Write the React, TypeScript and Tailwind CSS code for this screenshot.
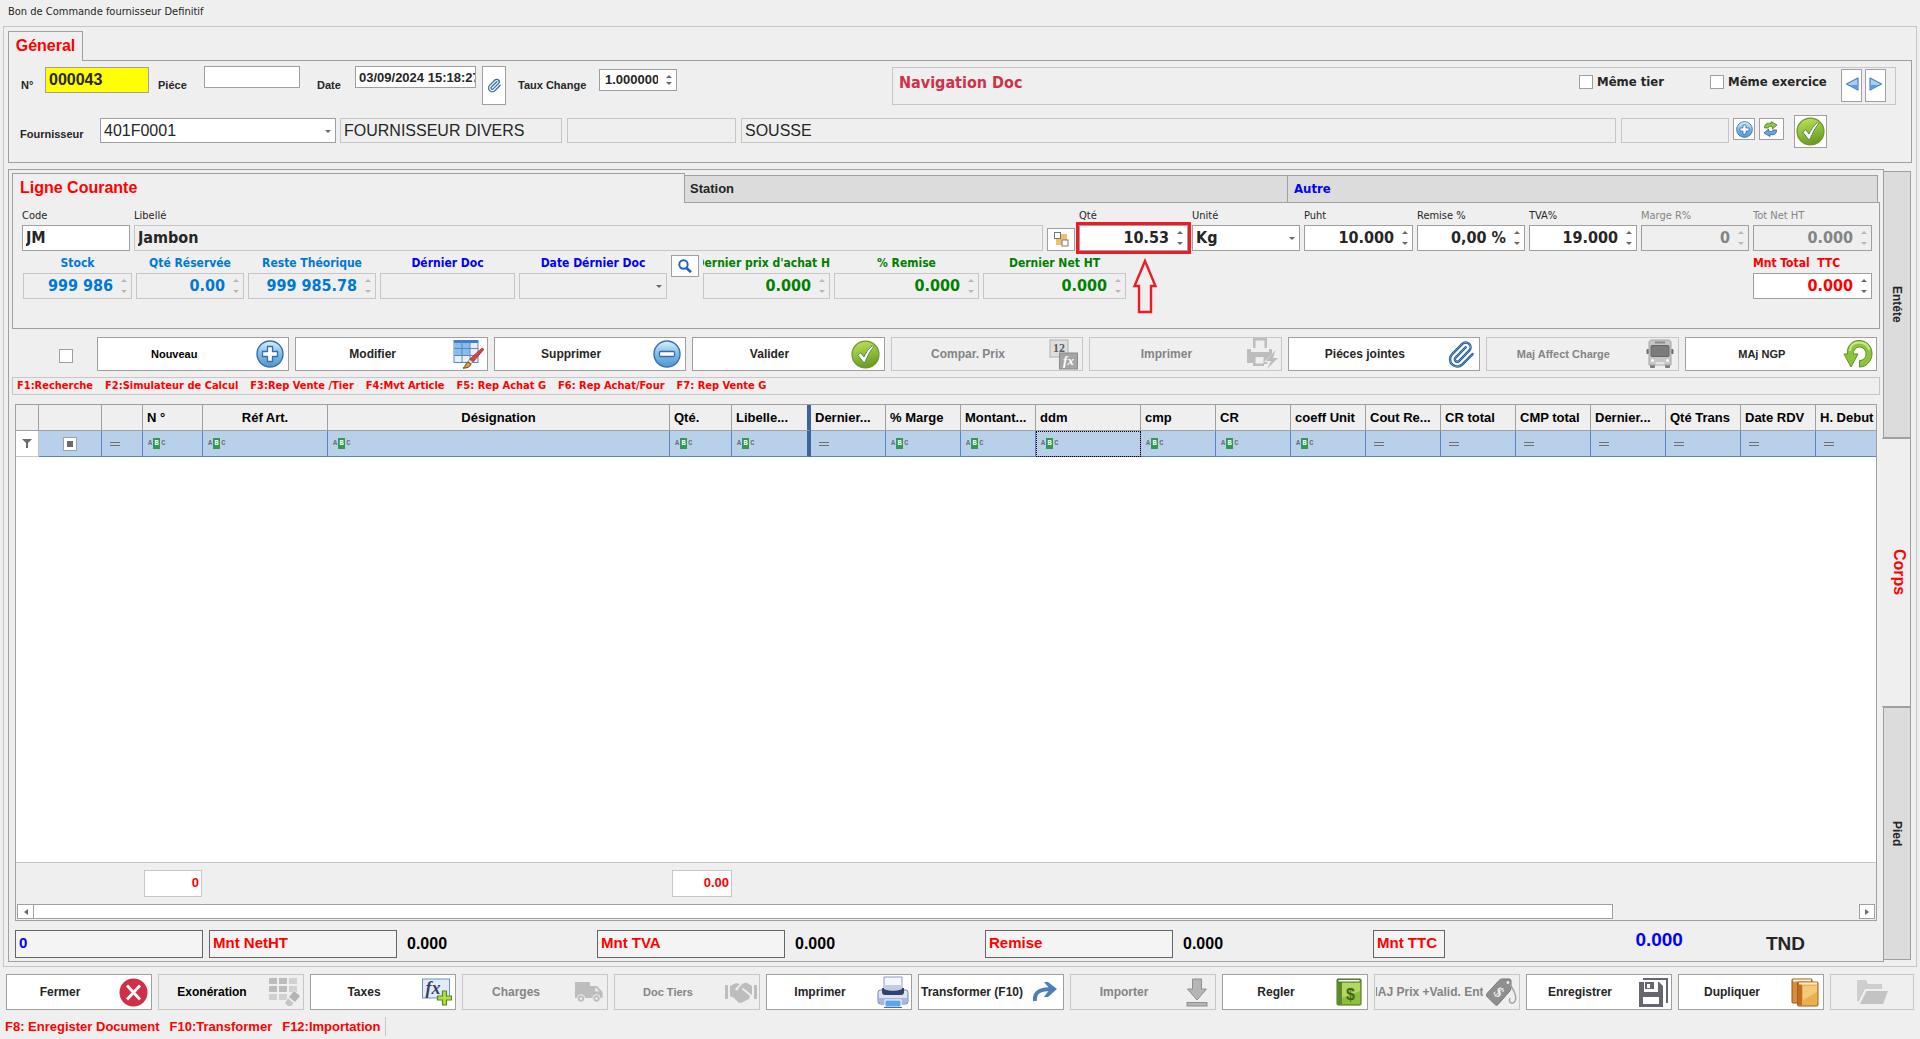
import React, { useId } from 'react';

const TAHOMA = "font-['DejaVu_Sans_Condensed','DejaVu_Sans',sans-serif]";

/* ---------- icons ---------- */

function BlueDisc({ size, minus = false }: { size: number; minus?: boolean }) {
  const id = useId();
  return (
    <svg width={size} height={size} viewBox="0 0 28 28" aria-hidden="true">
      <defs>
        <linearGradient id={id} x1="0" y1="0" x2="0" y2="1">
          <stop offset="0" stopColor="#d6f3fb" />
          <stop offset="0.5" stopColor="#7dbde6" />
          <stop offset="1" stopColor="#4f97d3" />
        </linearGradient>
      </defs>
      <circle cx="14" cy="14" r="13" fill={`url(#${id})`} stroke="#3d6fae" strokeWidth="1.4" />
      {minus ? (
        <rect x="6.5" y="11.5" width="15" height="5" rx="1" fill="#fff" stroke="#3f68a6" strokeWidth="1.3" />
      ) : (
        <path d="M11.5 6.5h5v5h5v5h-5v5h-5v-5h-5v-5h5z" fill="#fff" stroke="#3f68a6" strokeWidth="1.3" strokeLinejoin="round" />
      )}
    </svg>
  );
}

function GreenCheck({ size }: { size: number }) {
  const id = useId();
  return (
    <svg width={size} height={size} viewBox="0 0 28 28" aria-hidden="true">
      <defs>
        <linearGradient id={id} x1="0" y1="0" x2="0.3" y2="1">
          <stop offset="0" stopColor="#c6e265" />
          <stop offset="0.5" stopColor="#93c63a" />
          <stop offset="1" stopColor="#6f9d22" />
        </linearGradient>
      </defs>
      <circle cx="14" cy="14" r="13" fill={`url(#${id})`} stroke="#6f9632" strokeWidth="1.2" />
      <path d="M6.5 14.500l3-2.200 3 4.200c2-4.500 4.500-8 8-11l1.500.8c-3.500 4-6 9-8.500 15.200h-1.500z" fill="#fff" stroke="#5a7f5a" strokeWidth="0.9" strokeLinejoin="round" />
    </svg>
  );
}

const IconTableBrush = () => (
  <svg width="32" height="30" viewBox="0 0 32 30" aria-hidden="true">
    <rect x="1" y="1.500" width="24" height="22" fill="#e6f0fb" stroke="#5b86c0" />
    <rect x="2" y="2" width="15" height="14" fill="#86bdec" />
    <rect x="1" y="1" width="24" height="3" fill="#3f7fc4" />
    <path d="M9 2v21M17 2v21M1 9.500h24M1 16.500h24" stroke="#5b86c0" strokeWidth="1" />
    <path d="M28.500 9.500c1.500-.8 2.500.6 1.600 1.800L20 23l-3.500-2.500z" fill="#d9443c" stroke="#8f2a25" strokeWidth="0.8" />
    <path d="M16.500 20.500L20 23l-2 2.200-3.200-2.400z" fill="#dfe3e8" stroke="#777" strokeWidth="0.6" />
    <path d="M14.800 22.800l3.200 2.400c-1 2.600-3.500 4-8 4 2.500-1.500 2.500-4.600 4.800-6.400z" fill="#e0a030" stroke="#5c3b12" strokeWidth="0.9" />
  </svg>
);

const CLIP = 'm16 6-8.414 8.586a2 2 0 0 0 2.829 2.829l8.414-8.586a4 4 0 1 0-5.657-5.657l-8.379 8.551a6 6 0 1 0 8.485 8.485l8.379-8.551';

const IconClip = ({ size }: { size: number }) => (
  <svg width={size} height={size} viewBox="1 0 23 24" fill="none" strokeLinecap="round" strokeLinejoin="round" aria-hidden="true">
    <path d={CLIP} stroke="#1f5596" strokeWidth="2" />
    <path d={CLIP} stroke="#7fb2e2" strokeWidth="0.600" />
  </svg>
);

const IconCompare = () => (
  <svg width="30" height="31" viewBox="0 0 30 31" aria-hidden="true">
    <rect x="1" y="1" width="18" height="17" fill="#dedede" stroke="#b0b0b0" />
    <text x="10" y="13" textAnchor="middle" fontFamily="Liberation Serif" fontWeight="bold" fontSize="12" fill="#5e5e5e">12</text>
    <rect x="10.500" y="14" width="18" height="16" fill="#a5a5a5" stroke="#8b8b8b" />
    <text x="19.500" y="26" textAnchor="middle" fontFamily="Liberation Serif" fontStyle="italic" fontWeight="bold" fontSize="13" fill="#fff">fx</text>
  </svg>
);

const IconQuickPrint = () => (
  <svg width="33" height="32" viewBox="0 0 33 32" fill="#bdbdbd" aria-hidden="true">
    <path d="M7 0h14v10h-2.500V2.500h-9V10H7z" />
    <path d="M1 11h4v3h18v-3h3v5l-8 8h4l-1 2H18v2H7v-3H1zM9.500 19v6.500h8V19z" fillRule="evenodd" />
    <path d="M29.500 12L20 23h5l-4 8 11-11h-5z" />
  </svg>
);

const IconBus = () => (
  <svg width="28" height="30" viewBox="0 0 28 30" aria-hidden="true">
    <rect x="4" y="24" width="5" height="5" rx="1" fill="#7d7d7d" />
    <rect x="19" y="24" width="5" height="5" rx="1" fill="#7d7d7d" />
    <rect x="0.500" y="10" width="2.500" height="5" rx="1" fill="#6d6d6d" />
    <rect x="25" y="10" width="2.500" height="5" rx="1" fill="#6d6d6d" />
    <path d="M3 4c0-2 1-3 3-3h16c2 0 3 1 3 3v22H3z" fill="#c6c6c6" stroke="#a5a5a5" />
    <rect x="9" y="2.500" width="10" height="2" fill="#8a8a8a" />
    <rect x="5" y="6.500" width="18" height="11" rx="1" fill="#7b7b7b" stroke="#666" />
    <circle cx="6.500" cy="21.500" r="1.500" fill="#fff" />
    <circle cx="21.500" cy="21.500" r="1.500" fill="#fff" />
    <rect x="9.500" y="23" width="9" height="2.500" fill="#e4e4e4" />
  </svg>
);

const IconGreenUndo = () => (
  <svg width="30" height="30" viewBox="0 0 30 30" aria-hidden="true">
    <path d="M4.500 15C3.500 7 9 1.500 16 1.500c7.500 0 13 5.500 13 13S23.500 28 16.500 28v-6.500c4 0 6.500-3 6.500-6.500 0-4-3-7-6.500-7s-6.500 3-6 7H15L8 28 1 15z" fill="#8bc53b" stroke="#5f8f28" strokeWidth="1" strokeLinejoin="round" />
    <path d="M7 12C7 6.500 11 3.500 16 3.500s9 3 10.500 7.500" stroke="#cfe88a" strokeWidth="1.800" fill="none" />
  </svg>
);

const IconRedClose = () => (
  <svg width="29" height="29" viewBox="0 0 29 29" aria-hidden="true">
    <circle cx="14.500" cy="14.500" r="14" fill="#d02f48" />
    <path d="M8 7.500l13 14M21 7.500l-13 14" stroke="#fff" strokeWidth="2.800" />
  </svg>
);

const IconGridErase = () => (
  <svg width="32" height="30" viewBox="0 0 32 30" aria-hidden="true">
    <g fill="#bcbcbc">
      <rect x="0" y="1" width="8" height="6" /><rect x="10" y="1" width="8" height="6" /><rect x="20" y="1" width="8" height="6" fill="#d0d0d0" />
      <rect x="0" y="9" width="8" height="6" /><rect x="10" y="9" width="8" height="6" /><rect x="20" y="9" width="8" height="6" fill="#d0d0d0" />
      <rect x="0" y="17" width="8" height="6" fill="#d0d0d0" /><rect x="10" y="17" width="8" height="6" fill="#d0d0d0" />
    </g>
    <path d="M25 13l7 6-9 11h-3l-5-5z" fill="#efefef" />
    <path d="M25 14l6 5-5 6-6-5z" fill="#b4b4b4" />
    <path d="M19 21.500l5.500 4.500-2.500 3h-3l-3-3z" fill="#c4c4c4" />
  </svg>
);

const IconFxPlus = () => (
  <svg width="30" height="28" viewBox="0 0 30 28" aria-hidden="true">
    <rect x="0.500" y="1" width="27" height="19" fill="#e3ebf8" stroke="#6d8fc4" />
    <text x="11" y="16" textAnchor="middle" fontFamily="Liberation Serif" fontStyle="italic" fontWeight="bold" fontSize="18" fill="#33435c">fx</text>
    <path d="M20.500 13h4v5h5v4h-5v5h-4v-5h-5v-4h5z" fill="#b4dc4c" stroke="#568a1c" strokeWidth="1.200" />
  </svg>
);

const IconTruck = () => (
  <svg width="28" height="22" viewBox="0 0 28 22" fill="#bdbdbd" aria-hidden="true">
    <path d="M0 1h15v16H0zM15 5h7l5.500 6v6H15z" />
    <path d="M20 7h1.500l3 3.500H20z" fill="#e8e8e8" />
    <circle cx="6" cy="17.500" r="3.800" stroke="#efefef" /><circle cx="21.500" cy="17.500" r="3.800" stroke="#efefef" />
    <circle cx="6" cy="17.500" r="1.300" fill="#efefef" /><circle cx="21.500" cy="17.500" r="1.300" fill="#efefef" />
  </svg>
);

const IconHandshake = () => (
  <svg width="32" height="22" viewBox="0 0 32 22" fill="#bdbdbd" aria-hidden="true">
    <rect x="0" y="4" width="3" height="14" /><rect x="29" y="4" width="3" height="14" />
    <path d="M5 5l6-3 4 1-5 5c1 2 4 2 6-.500l9 7.500-1 3-7 3.500L14 22l-5-5-4-2z" />
    <path d="M17 3l4-1.500L27 5v9l-9-7-4 2.500-1.500-1z" />
  </svg>
);

const IconPrinter = () => (
  <svg width="32" height="32" viewBox="0 0 32 32" aria-hidden="true">
    <rect x="1" y="14" width="30" height="14" rx="2.500" fill="#dbe3f4" stroke="#6f7fae" />
    <path d="M2 22h28v5H2z" fill="#a9b7dc" />
    <path d="M5 12h22v4c0 2-1 3-3 3H8c-2 0-3-1-3-3z" fill="#34416b" />
    <path d="M7 1h18v11c-4 3-14 3-18 0z" fill="#f3f6fd" stroke="#8d9ac4" />
    <path d="M7 9h18v4c-4 2-14 2-18 0z" fill="#c2cce6" />
    <rect x="8" y="24" width="16" height="7" fill="#5ba6e6" stroke="#fff" />
    <path d="M7 31.500h18" stroke="#5a6a9a" />
  </svg>
);

const IconTransform = () => (
  <svg width="24" height="20" viewBox="0 0 24 20" aria-hidden="true">
    <path d="M2 19C1 10 7 7 19 7" stroke="#4a7fb8" strokeWidth="4" fill="none" />
    <path d="M11 0h4l9 7-9 8h-4l6-8z" fill="#4a7fb8" />
  </svg>
);

const IconDownload = () => (
  <svg width="22" height="29" viewBox="0 0 22 29" fill="#b5b5b5" stroke="#8f8f8f" aria-hidden="true">
    <path d="M6.500 1h9v10h5L11 22 1.500 11h5z" />
    <rect x="1" y="24.500" width="20" height="3.500" />
  </svg>
);

const IconMoneyBook = () => (
  <svg width="26" height="28" viewBox="0 0 26 28" aria-hidden="true">
    <rect x="1" y="1" width="24" height="26" rx="1" fill="#8fc03c" stroke="#456b1c" />
    <rect x="1.500" y="1.500" width="4.500" height="25" fill="#5c8a2a" />
    <rect x="2" y="1.500" width="22" height="2.500" fill="#eef6f4" stroke="#456b1c" strokeWidth="0.800" />
    <path d="M6 5h18v8L6 20z" fill="#b2d860" />
    <text x="14.500" y="22" textAnchor="middle" fontFamily="Liberation Sans" fontWeight="bold" fontSize="16" fill="#41641b">$</text>
  </svg>
);

const IconTag = () => (
  <svg width="31" height="29" viewBox="0 0 31 29" aria-hidden="true">
    <path d="M13 2.500C14 1.500 15 1 16 1h7c1.500 0 2 1 2 2v7c0 1-.5 2-1.200 3L12 26.500c-1 1-2 1-3 0L1 18.500c-1-1-.8-2 0-3z" fill="#8f8f8f" stroke="#757575" />
    <circle cx="22" cy="4.500" r="1.500" fill="#eee" />
    <path d="M23 5c5 7 8 14 6 18s-7 2-5-3" fill="none" stroke="#a0a0a0" strokeWidth="1.400" />
    <text x="13" y="19" textAnchor="middle" transform="rotate(45 13 14)" fontFamily="Liberation Serif" fontWeight="bold" fontSize="15" fill="#ededed">$</text>
  </svg>
);

const IconSave = () => (
  <svg width="29" height="29" viewBox="0 0 29 29" fill="#67666f" aria-hidden="true">
    <path d="M4 0h25v25h-2V2H4z" />
    <path d="M0 4h5v10h14V4h1l4 4v21H0zM4 19v7h16v-7z" fillRule="evenodd" />
    <path d="M6 4h9v7H6zM8 6v4h3V6z" fillRule="evenodd" />
  </svg>
);

const IconBooks = () => (
  <svg width="28" height="29" viewBox="0 0 28 29" aria-hidden="true">
    <rect x="1" y="1" width="20" height="24" rx="1" fill="#d98c3c" stroke="#9a5212" />
    <rect x="2" y="1.500" width="18" height="2" fill="#fdf3de" />
    <rect x="6.500" y="4" width="20.500" height="24" rx="1" fill="#eab04e" stroke="#a3611a" />
    <rect x="7" y="4.500" width="4" height="23" fill="#c06c22" />
    <rect x="8" y="4.500" width="18" height="2" fill="#fdf3de" />
    <path d="M12 8h14v6l-14 8z" fill="#f4ca78" />
  </svg>
);

const IconFolder = () => (
  <svg width="31" height="24" viewBox="0 0 31 24" fill="#c3c3c3" aria-hidden="true">
    <path d="M0 21V0h9l2 4h14v5H8L1.500 22z" fill="#cecece" />
    <path d="M9.500 11H31l-5 13H3z" />
  </svg>
);

const IconRefresh = () => (
  <svg width="15" height="16" viewBox="0 0 15 16" strokeLinejoin="round" aria-hidden="true">
    <path d="M1.500 7C1 3.500 4 1.500 8 2.500V.5L14 4 9.500 8V6C7 5 5.500 5.500 5 7z" fill="#8dc63f" stroke="#4f7f1a" strokeWidth="0.800" />
    <path d="M13.500 9c.5 3.500-2.500 5.500-6.500 4.500v2L1 12l4.500-4v2c2.500 1 4 .5 4.500-1z" fill="#6ba5dc" stroke="#2f5f9c" strokeWidth="0.800" />
  </svg>
);

const IconNav = ({ right = false }: { right?: boolean }) => (
  <svg width="14" height="14" viewBox="0 0 14 14" aria-hidden="true">
    <path d={right ? 'M1 1v12L12.500 7z' : 'M13 1v12L1.500 7z'} fill="#a8d0f2" stroke="#4a7fc0" strokeWidth="1.200" strokeLinejoin="round" />
    <path d={right ? 'M2 8v4l8-4z' : 'M12 8v4L4 8z'} fill="#5b9bdc" />
  </svg>
);

const IconSearch = () => (
  <svg width="14" height="14" viewBox="0 0 14 14" fill="none" stroke="#1f5fc0" aria-hidden="true">
    <circle cx="5.500" cy="5.500" r="4.200" strokeWidth="1.900" />
    <path d="M8.500 9l4.500 4.200" strokeWidth="2.600" />
  </svg>
);

const IconSquares = () => (
  <svg width="15" height="15" viewBox="0 0 15 15" aria-hidden="true">
    <path d="M7 2h6v6H7zM2 7h6v6H2z" fill="#f0bf68" />
    <rect x="0.500" y="0.500" width="6" height="6" fill="#fff" stroke="#777" />
    <rect x="8" y="8" width="6" height="6" fill="#fff" stroke="#777" />
  </svg>
);

const IconAbc = () => (
  <span className="flex items-center gap-px font-['Liberation_Mono',monospace] text-[7px] leading-[11px] font-bold text-[#6e6e6e]" aria-label="Filtre texte">
    <span>A</span>
    <span className="h-[11px] w-[7px] bg-[#2f9a50] text-center text-white">B</span>
    <span>C</span>
  </span>
);

const IconEq = () => (
  <svg className="ml-[3px]" width="10" height="4" viewBox="0 0 10 4" aria-hidden="true">
    <path d="M0 .5h10M0 3.500h10" stroke="#707070" />
  </svg>
);

const Arrows = ({ light = false }: { light?: boolean }) => (
  <span className={`flex w-[18px] shrink-0 flex-col items-center justify-between py-[5px] pl-1 ${light ? 'text-[#b8b8b8]' : 'text-[#6a6a6a]'}`}>
    <button type="button" aria-label="Augmenter" disabled={light}><svg width="6" height="3" viewBox="0 0 6 3" className="block"><path d="M0 3l3-3 3 3z" fill="currentColor" /></svg></button>
    <button type="button" aria-label="Diminuer" disabled={light}><svg width="6" height="3" viewBox="0 0 6 3" className="block"><path d="M0 0l3 3 3-3z" fill="currentColor" /></svg></button>
  </span>
);

const Caret = () => (
  <svg className="pointer-events-none absolute top-1/2 right-1 -mt-px" width="6" height="3" viewBox="0 0 6 3" aria-hidden="true">
    <path d="M0 0l3 3 3-3z" fill="#6a6a6a" />
  </svg>
);

/* ---------- fields ---------- */

interface FieldProps {
  label: string;
  value?: string;
  width: string;
  kind?: 'text' | 'spin' | 'select';
  /* frame and text colour of the control */
  look?: string;
  labelLook?: string;
  light?: boolean;
  children?: React.ReactNode;
}

const WHITE = 'border-[#a0a0a0] bg-white text-[#262626]';
const MUTED = 'border-[#a0a0a0] bg-[#efefef] text-[#848484]';

function Field({ label, value = '', width, kind = 'spin', look = WHITE, labelLook = 'h-[14px] text-[11px] leading-[14px] text-[#262626]', light = false, children }: FieldProps) {
  const id = useId();
  return (
    <div className={`relative flex flex-col gap-[2px] ${width} ${TAHOMA}`}>
      <label htmlFor={id} className={`flex overflow-hidden whitespace-nowrap ${labelLook}`}>{label}</label>
      <div className={`relative flex h-[26px] border text-[16px] font-bold ${look}`}>
        {kind === 'select' ? (
          <>
            <select id={id} defaultValue={value} className="w-full appearance-none pl-[3px] outline-none">
              <option>{value}</option>
            </select>
            <Caret />
          </>
        ) : (
          <input id={id} defaultValue={value} disabled={light} className={`w-0 min-w-0 flex-1 outline-none ${kind === 'spin' ? 'text-right' : 'pl-[3px]'}`} />
        )}
        {kind === 'spin' && <Arrows light={light} />}
        {children}
      </div>
    </div>
  );
}

const SUB = 'h-4 justify-center text-[12px] leading-4 font-bold';
const SUB_CYAN = `${SUB} text-[#0078d7]`;
const SUB_BLUE = `${SUB} text-[#0000ff]`;
const SUB_GREEN = `${SUB} text-[#008000]`;

/* ---------- buttons ---------- */

interface ToolProps {
  label?: string;
  icon: React.ReactNode;
  off?: boolean;
  text?: string;
}

function Tool({ label, icon, off = false, text = 'text-[12px]' }: ToolProps) {
  return (
    <button
      type="button"
      disabled={off}
      aria-label={label ?? 'Ouvrir'}
      className={`flex min-w-0 items-center border font-bold ${text} ${off ? 'border-[#c6c6c6] bg-[#efefef] text-[#848484]' : 'border-[#a0a0a0] bg-white text-[#262626]'}`}
    >
      {label && <span className="ml-px flex min-w-0 flex-1 justify-center overflow-hidden pr-[3px] whitespace-nowrap">{label}</span>}
      <span className={`flex shrink-0 justify-center ${label ? 'w-9' : 'w-full'}`}>{icon}</span>
    </button>
  );
}

/* ---------- grid ---------- */

interface Col {
  name: string;
  w: string;
  f: 'abc' | 'eq';
  center?: boolean;
}

const columns: Col[] = [
  { name: '', w: 'w-[41px]', f: 'eq' },
  { name: 'N °', w: 'w-[60px]', f: 'abc' },
  { name: 'Réf Art.', w: 'w-[125px]', f: 'abc', center: true },
  { name: 'Désignation', w: '', f: 'abc', center: true },
  { name: 'Qté.', w: 'w-[62px]', f: 'abc' },
  { name: 'Libelle...', w: 'w-[79px]', f: 'abc' },
  { name: 'Dernier...', w: 'w-[75px]', f: 'eq' },
  { name: '% Marge', w: 'w-[75px]', f: 'abc' },
  { name: 'Montant...', w: 'w-[75px]', f: 'abc' },
  { name: 'ddm', w: 'w-[105px]', f: 'abc' },
  { name: 'cmp', w: 'w-[75px]', f: 'abc' },
  { name: 'CR', w: 'w-[75px]', f: 'abc' },
  { name: 'coeff Unit', w: 'w-[75px]', f: 'abc' },
  { name: 'Cout Re...', w: 'w-[75px]', f: 'eq' },
  { name: 'CR total', w: 'w-[75px]', f: 'eq' },
  { name: 'CMP total', w: 'w-[75px]', f: 'eq' },
  { name: 'Dernier...', w: 'w-[75px]', f: 'eq' },
  { name: 'Qté Trans', w: 'w-[75px]', f: 'eq' },
  { name: 'Date RDV', w: 'w-[75px]', f: 'eq' },
  { name: 'H. Debut', w: 'w-[60px]', f: 'eq' },
];

function GridTable() {
  const last = columns.length - 1;
  return (
    <table className="w-full table-fixed border-separate border-spacing-0 text-[13px]">
      <thead>
        <tr className="h-[26px]">
          <th className="w-[23px] border-r border-b border-[#a0a0a0]" />
          <th className="w-[63px] border-r border-b border-[#a0a0a0]" />
          {columns.map((c, i) => (
            <th
              key={i}
              className={`overflow-hidden border-b border-b-[#a0a0a0] p-0 font-bold whitespace-nowrap text-black ${c.w} ${c.center ? 'text-center' : 'pl-[4px] text-left'} ${c.name === 'Libelle...' ? 'border-r-4 border-r-[#3c639c]' : i < last ? 'border-r border-r-[#a0a0a0]' : ''}`}
            >
              {c.name}
            </th>
          ))}
        </tr>
      </thead>
      <tbody>
        <tr className="h-[26px] bg-[#b9d0ea]">
          <td className="border-r border-b border-[#c6c6c6] bg-white p-0">
            <svg className="mx-auto" width="10" height="9" viewBox="0 0 10 9" aria-label="Filtre"><path d="M0 0h10L6 4v5H4V4z" fill="#6a6a6a" /></svg>
          </td>
          <td className="border-r border-b border-[#5c83c6] p-0">
            <input type="checkbox" aria-label="Filtrer la sélection" className="mx-auto grid h-[14px] w-[14px] appearance-none place-content-center border border-[#a0a0a0] bg-white before:block before:h-[6px] before:w-[6px] before:bg-[#6a6a6a]" />
          </td>
          {columns.map((c, i) => (
            <td
              key={i}
              className={`border-b border-b-[#5c83c6] p-0 pl-[5px] ${c.name === 'Libelle...' ? 'border-r-4 border-r-[#3c639c]' : i < last ? 'border-r border-r-[#5c83c6]' : ''} ${c.name === 'ddm' ? 'outline-1 -outline-offset-1 outline-black outline-dotted' : ''}`}
            >
              {c.f === 'abc' ? <IconAbc /> : <IconEq />}
            </td>
          ))}
        </tr>
      </tbody>
    </table>
  );
}

const shortcuts = ['F1:Recherche', 'F2:Simulateur de Calcul', 'F3:Rep Vente /Tier', 'F4:Mvt Article', 'F5: Rep Achat G', 'F6: Rep Achat/Four', 'F7: Rep Vente G'];

const totals = [
  { label: 'Mnt NetHT', value: '0.000' },
  { label: 'Mnt TVA', value: '0.000' },
  { label: 'Remise', value: '0.000' },
];

const TOTAL_BOX = 'flex h-[28px] items-center border border-[#646464] bg-[#f4f4f4] px-[3px] pb-px text-[15px] font-bold';
const LABEL11 = 'text-[11px] leading-4 font-bold text-[#262626]';

export default function App() {
  return (
    <div className="flex min-h-screen flex-col bg-[#efefef] font-['Liberation_Sans',Arial,sans-serif] text-[#262626]">
      <h1 className={`h-[26px] px-2 pt-1 text-[11px] leading-4 ${TAHOMA}`}>Bon de Commande fournisseur Definitif</h1>

      <main className="mx-[3px] flex flex-1 flex-col border border-[#c6c6c6] p-1">
        <div role="tablist" className="flex">
          <button type="button" role="tab" aria-selected="true" className="relative -mb-px h-[30px] w-[75px] border border-b-0 border-[#a0a0a0] bg-[#efefef] pb-[2px] text-[16px] font-bold text-[#ff0000]">Géneral</button>
        </div>

        <section className="border border-[#a0a0a0] pb-[14px]">
          <div className="flex items-start">
            <label htmlFor="num" className={`mt-4 ml-3 w-6 ${LABEL11}`}>N°</label>
            <input id="num" defaultValue="000043" className="mt-[6px] h-[26px] w-[104px] border border-[#a0a0a0] bg-[#ffff00] px-[3px] text-[16px] font-bold" />
            <label htmlFor="piece" className={`mt-4 ml-[9px] w-[46px] ${LABEL11}`}>Piéce</label>
            <input id="piece" className="mt-[5px] h-[22px] w-[96px] border border-[#a0a0a0] bg-white px-1" />
            <label htmlFor="date" className={`mt-4 ml-[17px] w-[38px] ${LABEL11}`}>Date</label>
            <input id="date" defaultValue="03/09/2024 15:18:27" className="mt-[5px] h-[22px] w-[121px] border border-[#a0a0a0] bg-white pl-[3px] text-[13px] font-bold" />
            <button type="button" aria-label="Joindre" className="mt-[5px] ml-[6px] flex h-[39px] w-[24px] items-center justify-center border border-[#a0a0a0] bg-white"><IconClip size={15} /></button>
            <label htmlFor="taux" className={`mt-4 ml-3 w-[81px] ${LABEL11}`}>Taux Change</label>
            <div className="mt-2 flex h-[22px] w-[78px] border border-[#a0a0a0] bg-white">
              <input id="taux" defaultValue="1.000000" className="w-0 min-w-0 flex-1 pl-[5px] text-[13px] font-bold outline-none" />
              <Arrows />
            </div>
            <div className={`mt-[6px] mr-[15px] ml-[215px] flex h-[38px] flex-1 items-start border border-[#c6c6c6] pr-[9px] font-bold ${TAHOMA}`}>
              <span className="mt-[3px] ml-[6px] flex-1 text-[16px] leading-6 text-[#d0304a]">Navigation Doc</span>
              <label className="mt-[6px] flex w-[131px] items-center gap-1 text-[13px] leading-4 whitespace-nowrap">
                <input type="checkbox" className="h-[14px] w-[14px] appearance-none border border-[#a0a0a0] bg-white" />Même tier
              </label>
              <label className="mt-[6px] flex w-[131px] items-center gap-1 text-[13px] leading-4 whitespace-nowrap">
                <input type="checkbox" className="h-[14px] w-[14px] appearance-none border border-[#a0a0a0] bg-white" />Même exercice
              </label>
              <button type="button" aria-label="Précédent" className="mt-px flex h-[33px] w-[21px] items-center justify-center border border-[#a0a0a0] bg-white pb-1"><IconNav /></button>
              <button type="button" aria-label="Suivant" className="mt-px ml-[3px] flex h-[33px] w-[21px] items-center justify-center border border-[#a0a0a0] bg-white pb-1"><IconNav right /></button>
            </div>
          </div>

          <div className="mt-[10px] flex items-start text-[16px]">
            <label htmlFor="four" className={`mt-[11px] ml-[11px] w-[80px] ${LABEL11}`}>Fournisseur</label>
            <div className="relative mt-[3px] h-[25px] w-[236px] border border-[#a0a0a0] bg-white">
              <select id="four" className="h-full w-full appearance-none pl-[3px]"><option>401F0001</option></select>
              <Caret />
            </div>
            <input aria-label="Nom du fournisseur" readOnly value="FOURNISSEUR DIVERS" className="mt-[3px] ml-1 h-[25px] w-[222px] border border-[#c6c6c6] px-[3px]" />
            <input aria-label="Adresse" readOnly className="mt-[3px] ml-[5px] h-[25px] w-[169px] border border-[#c6c6c6]" />
            <input aria-label="Ville" readOnly value="SOUSSE" className="mt-[3px] ml-[5px] h-[25px] min-w-0 flex-1 border border-[#c6c6c6] px-[3px]" />
            <input aria-label="Code postal" readOnly className="mt-[3px] ml-[5px] h-[25px] w-[108px] border border-[#c6c6c6]" />
            <button type="button" aria-label="Ajouter" className="mt-[3px] ml-1 flex h-[22px] w-[22px] items-center justify-center border border-[#a0a0a0] bg-white"><BlueDisc size={17} /></button>
            <button type="button" aria-label="Actualiser" className="mt-[3px] ml-1 flex h-[22px] w-[25px] items-center border border-[#a0a0a0] bg-white pl-[3px]"><IconRefresh /></button>
            <button type="button" aria-label="Valider le fournisseur" className="mr-[84px] ml-[10px] flex h-[33px] w-[33px] items-center justify-center border border-[#a0a0a0] bg-white"><GreenCheck size={29} /></button>
          </div>
        </section>

        <div className="mt-[6px] flex flex-1">
          <section className="flex min-w-0 flex-1 flex-col border border-[#a0a0a0] p-[3px]">
            <div role="tablist" className="flex items-end text-[13px] font-bold">
              <button type="button" role="tab" aria-selected="true" className="relative -mb-px h-[30px] w-[673px] border border-b-0 border-[#a0a0a0] bg-[#efefef] pb-[2px] pl-[7px] text-left text-[16px] text-[#ff0000]">Ligne Courante</button>
              <button type="button" role="tab" aria-selected="false" className="h-[27px] w-[603px] border border-b-0 border-l-0 border-[#a0a0a0] bg-[#dcdcdc] pl-[5px] text-left">Station</button>
              <button type="button" role="tab" aria-selected="false" className={`mr-[2px] h-[27px] flex-1 border border-b-0 border-l-0 border-[#a0a0a0] bg-[#dcdcdc] pl-[6px] text-left text-[#0000ff] ${TAHOMA}`}>Autre</button>
            </div>

            <div className="border border-[#a0a0a0] pt-[6px] pr-[7px] pb-[29px] pl-[9px]">
              <div className="flex gap-1">
                <Field label="Code" value="JM" kind="text" width="w-[108px]" />
                <Field label="Libellé" value="Jambon" kind="text" width="min-w-0 flex-1" look="border-[#c6c6c6] text-[#262626]" />
                <button type="button" aria-label="Détails article" className="flex h-[23px] w-[28px] items-center justify-center self-end border border-[#a0a0a0] bg-white"><IconSquares /></button>
                <Field label="Qté" value="10.53" width="w-[109px]">
                  <span className="pointer-events-none absolute -inset-[4px] border-[3px] border-[#ed1c24]" />
                  <svg className="pointer-events-none absolute top-[32px] left-[52px]" width="26" height="58" viewBox="0 0 26 58" fill="none" stroke="#ed1c24" strokeWidth="2.400" aria-hidden="true">
                    <path d="M13 3L2.500 28H7v26h12V28h4.500z" />
                  </svg>
                </Field>
                <Field label="Unité" value="Kg" kind="select" width="w-[108px]" />
                <Field label="Puht" value="10.000" width="w-[109px]" />
                <Field label="Remise %" value="0,00 %" width="w-[108px]" />
                <Field label="TVA%" value="19.000" width="w-[108px]" />
                <Field label="Marge R%" value="0" width="w-[108px]" look={MUTED} light labelLook="h-[14px] text-[11px] leading-[14px] text-[#848484]" />
                <Field label="Tot Net HT" value="0.000" width="w-[119px]" look={MUTED} light labelLook="h-[14px] text-[11px] leading-[14px] text-[#848484]" />
              </div>
              <div className="mt-1 flex gap-1 pl-px">
                <Field label="Stock" value="999 986" width="w-[109px]" light look="border-[#c6c6c6] text-[#0078d7]" labelLook={SUB_CYAN} />
                <Field label="Qté Réservée" value="0.00" width="w-[108px]" light look="border-[#c6c6c6] text-[#0078d7]" labelLook={SUB_CYAN} />
                <Field label="Reste Théorique" value="999 985.78" width="w-[128px]" light look="border-[#c6c6c6] text-[#0078d7]" labelLook={SUB_CYAN} />
                <Field label="Dérnier Doc" kind="text" width="w-[135px]" look="border-[#c6c6c6]" labelLook={SUB_BLUE} />
                <Field label="Date Dérnier Doc" kind="select" width="w-[148px]" look="border-[#c6c6c6]" labelLook={SUB_BLUE} />
                <button type="button" aria-label="Rechercher" className="flex h-[22px] w-[28px] items-center justify-center border border-[#a0a0a0] bg-white"><IconSearch /></button>
                <Field label="Dernier prix d'achat HT" value="0.000" width="w-[127px]" light look="border-[#c6c6c6] text-[#008000]" labelLook={SUB_GREEN} />
                <Field label="% Remise" value="0.000" width="w-[145px]" light look="border-[#c6c6c6] text-[#008000]" labelLook={SUB_GREEN} />
                <Field label="Dernier Net HT" value="0.000" width="w-[143px]" light look="border-[#c6c6c6] text-[#008000]" labelLook={SUB_GREEN} />
                <Field label={'Mnt Total\u00a0 TTC'} value="0.000" width="ml-auto w-[119px]" look="border-[#a0a0a0] bg-white text-[#ff0000]" labelLook="h-4 text-[12px] leading-4 font-bold text-[#ff0000]" />
              </div>
            </div>

            <div className="mt-2 mr-[3px] ml-[47px] flex items-center gap-6">
              <input type="checkbox" aria-label="Sélection" className="mt-[6px] h-[14px] w-[14px] appearance-none border border-[#a0a0a0] bg-white" />
              <div className="grid h-[32px] flex-1 grid-cols-9 gap-[6px]">
                <Tool label="Nouveau" text="text-[11px] text-black" icon={<BlueDisc size={28} />} />
                <Tool label="Modifier" icon={<IconTableBrush />} />
                <Tool label="Supprimer" icon={<BlueDisc size={28} minus />} />
                <Tool label="Valider" icon={<GreenCheck size={29} />} />
                <Tool label="Compar. Prix" off icon={<IconCompare />} />
                <Tool label="Imprimer" off icon={<IconQuickPrint />} />
                <Tool label="Piéces jointes" icon={<IconClip size={29} />} />
                <Tool label="Maj Affect Charge" text="text-[11px]" off icon={<IconBus />} />
                <Tool label="MAj NGP" text="text-[11px]" icon={<IconGreenUndo />} />
              </div>
            </div>

            <ul className={`mt-2 flex h-[18px] items-center gap-3 border border-[#c6c6c6] px-1 text-[11px] font-bold text-[#ff0000] ${TAHOMA}`}>
              {shortcuts.map((s) => <li key={s}>{s}</li>)}
            </ul>

            <div className="mx-[3px] mt-[9px] flex flex-1 flex-col border border-[#a0a0a0]">
              <GridTable />
              <div className="flex-1 border-b border-[#c6c6c6] bg-white" />
              <div className="flex h-[41px] items-center pb-px text-[13px] font-bold text-[#ff0000]">
                <output className="ml-[128px] flex h-[27px] w-[58px] items-center justify-end border border-[#c6c6c6] bg-white pr-[2px]">0</output>
                <output className="ml-[470px] flex h-[27px] w-[60px] items-center justify-end border border-[#c6c6c6] bg-white pr-[2px]">0.00</output>
              </div>
              <div className="mx-px mb-px flex h-[15px]">
                <button type="button" aria-label="Défiler à gauche" className="flex w-[17px] items-center justify-center border border-[#a0a0a0] bg-white"><svg width="4" height="6" viewBox="0 0 4 6"><path d="M4 0v6L0 3z" fill="#6a6a6a" /></svg></button>
                <div className="w-[85%] border border-l-0 border-[#a0a0a0] bg-white" />
                <div className="flex-1" />
                <button type="button" aria-label="Défiler à droite" className="flex w-[16px] items-center justify-center border border-[#a0a0a0] bg-white"><svg width="4" height="6" viewBox="0 0 4 6"><path d="M0 0v6l4-3z" fill="#6a6a6a" /></svg></button>
              </div>
            </div>

            <div className="mt-[9px] mr-[3px] ml-[3px] flex">
              <output className={`${TOTAL_BOX} mr-[6px] w-[188px] text-[#0000ff]`}>0</output>
              {totals.map((t) => (
                <div key={t.label} className="flex w-[388px] items-center">
                  <span className={`${TOTAL_BOX} w-[188px] text-[#ff0000]`}>{t.label}</span>
                  <output className="ml-[10px] text-[16px] font-bold text-black">{t.value}</output>
                </div>
              ))}
              <span className={`${TOTAL_BOX} w-[72px] text-[#ff0000]`}>Mnt TTC</span>
              <output className="ml-auto text-[19px] leading-5 font-bold text-[#0000ff]">0.000</output>
              <span className="mr-[72px] ml-[83px] self-center text-[19px] leading-6 font-bold">TND</span>
            </div>
          </section>

          <div role="tablist" aria-orientation="vertical" className="-ml-px flex w-[29px] flex-col items-start py-[2px] text-[12px] font-bold">
            <button type="button" role="tab" aria-selected="false" className="flex w-[28px] flex-[267] items-center justify-center border border-[#a0a0a0] bg-[#dcdcdc] [writing-mode:vertical-rl]">Entéte</button>
            <button type="button" role="tab" aria-selected="true" className="-my-px flex w-[29px] flex-[270] items-center justify-center border border-l-0 border-[#a0a0a0] bg-[#efefef] pl-[6px] text-[16px] text-[#ff0000] [writing-mode:vertical-rl]">Corps</button>
            <button type="button" role="tab" aria-selected="false" className="flex w-[28px] flex-[253] items-center justify-center border border-[#a0a0a0] bg-[#dcdcdc] [writing-mode:vertical-rl]">Pied</button>
          </div>
        </div>
      </main>

      <div className="mx-[6px] mt-[7px] grid h-[36px] grid-cols-[repeat(12,minmax(0,146fr))_minmax(0,84fr)] gap-[6px]">
        <Tool label="Fermer" icon={<IconRedClose />} />
        <Tool label="Exonération" off text="text-[12px] text-black!" icon={<IconGridErase />} />
        <Tool label="Taxes" icon={<IconFxPlus />} />
        <Tool label="Charges" off icon={<IconTruck />} />
        <Tool label="Doc Tiers" off text="text-[11px]" icon={<IconHandshake />} />
        <Tool label="Imprimer" icon={<IconPrinter />} />
        <Tool label="Transformer (F10)" icon={<IconTransform />} />
        <Tool label="Importer" off icon={<IconDownload />} />
        <Tool label="Regler" icon={<IconMoneyBook />} />
        <Tool label="MAJ Prix +Valid. Entr" off icon={<IconTag />} />
        <Tool label="Enregistrer" icon={<IconSave />} />
        <Tool label="Dupliquer" icon={<IconBooks />} />
        <Tool off icon={<IconFolder />} />
      </div>

      <footer className="mt-[7px] mb-[3px] flex h-[19px] items-center text-[13px] font-bold text-[#ff0000]">
        <ul className="flex h-full items-center gap-[10px] border-r border-[#c6c6c6] pr-[5px] pl-[5px]">
          <li>F8: Enregister Document</li>
          <li>F10:Transformer</li>
          <li>F12:Importation</li>
        </ul>
      </footer>
    </div>
  );
}
